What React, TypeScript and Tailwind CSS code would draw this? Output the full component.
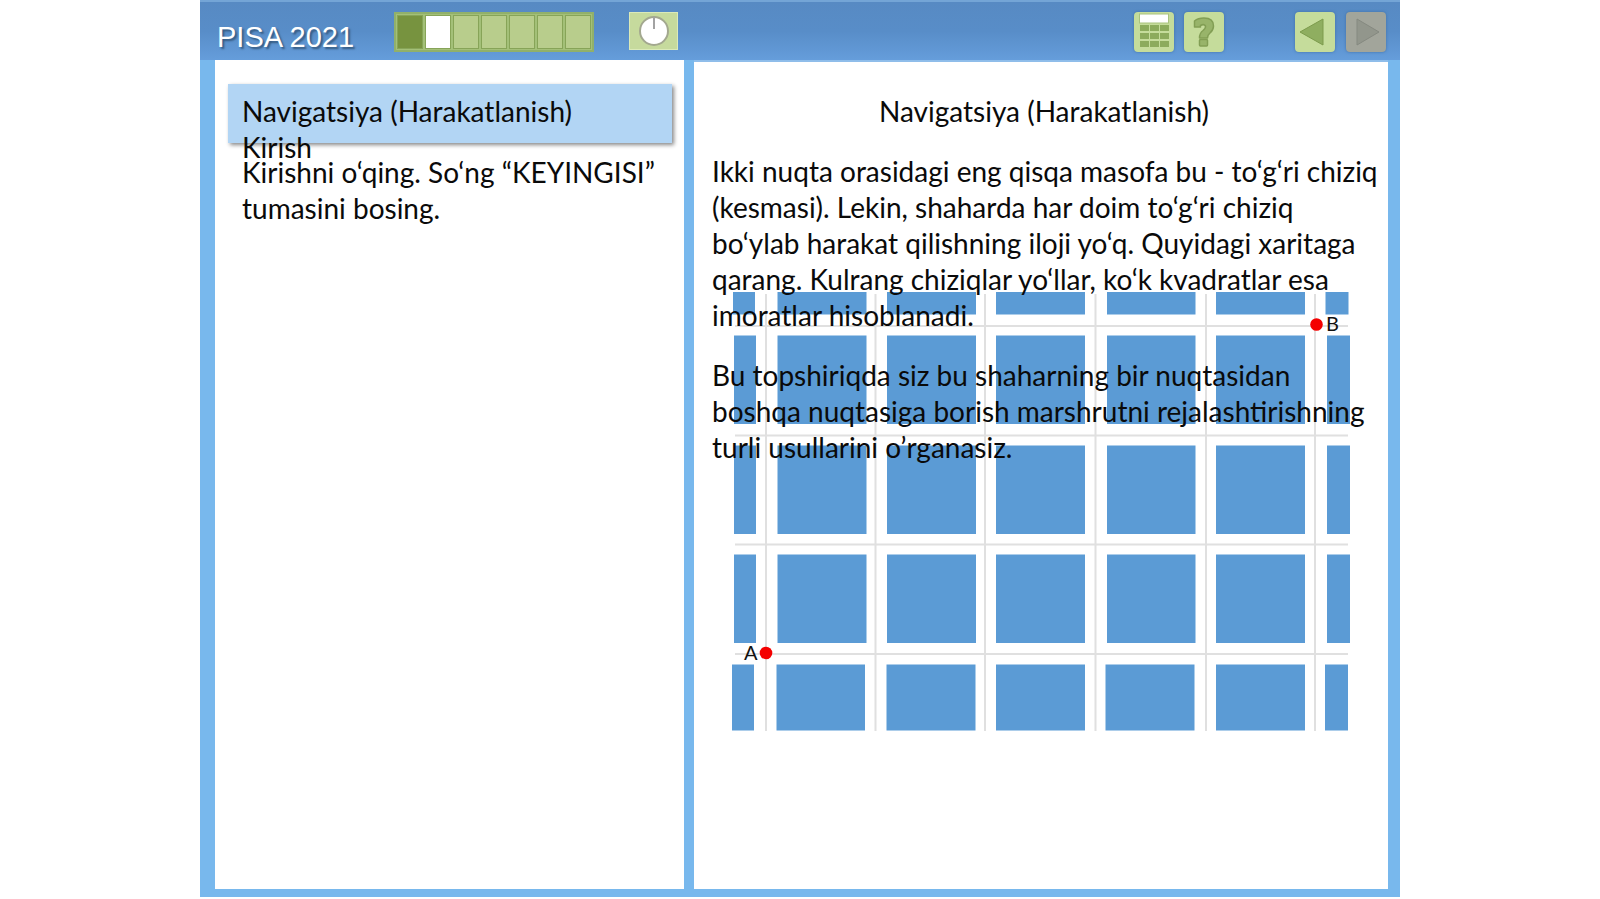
import type { ReactNode } from "react";

const STEPS = ["done", "current", "todo", "todo", "todo", "todo", "todo"] as const;

const stepColors = {
  done: "bg-[#77933f]",
  current: "bg-white",
  todo: "bg-[#b8cd8c]",
};

/* City map: [x, width] of each block in a row, [y, height] of each row */
const COLUMNS = [
  [2, 22],
  [45.5, 89],
  [155, 89],
  [264, 89],
  [375, 88.5],
  [484, 89],
  [595, 23],
];
const TOP_COLUMNS = [[1, 22], ...COLUMNS.slice(1, 6), [593.5, 23]];
const BOTTOM_COLUMNS = [
  [0, 22],
  [44.5, 88.5],
  [154.5, 89],
  [264, 89],
  [373.5, 89],
  [484, 89],
  [593, 23],
];
const ROWS = [
  { y: 1, height: 22.5, columns: TOP_COLUMNS },
  { y: 44.5, height: 88.5, columns: COLUMNS },
  { y: 154.5, height: 88.5, columns: COLUMNS },
  { y: 263.5, height: 88.5, columns: COLUMNS },
  { y: 373.5, height: 66, columns: BOTTOM_COLUMNS },
];
const STREETS_X = [34, 143.5, 253, 363.5, 474, 583];
const STREETS_Y = [35, 144.5, 253.5, 363];

function CityMap() {
  return (
    <svg viewBox="0 0 618 440" className="w-full" role="img" aria-label="Xarita">
      <g fill="#5b9bd5">
        {ROWS.map((row) =>
          row.columns.map(([x, width]) => (
            <rect key={`${row.y}-${x}`} x={x} y={row.y} width={width} height={row.height} />
          )),
        )}
      </g>
      <g stroke="#e0e0e0" strokeWidth="2">
        {STREETS_X.map((x) => (
          <line key={x} x1={x} x2={x} y1="3" y2="440" />
        ))}
        {STREETS_Y.map((y) => (
          <line key={y} x1="3" x2="616" y1={y} y2={y} />
        ))}
      </g>
      <g fill="#f40000">
        <circle cx="34" cy="362" r="6.3" />
        <circle cx="584.5" cy="33.5" r="6.3" />
      </g>
      <g fontSize="20" fill="#111111">
        <text x="12" y="369">A</text>
        <text x="594" y="40">B</text>
      </g>
    </svg>
  );
}

function ToolButton({
  label,
  disabled = false,
  children,
}: {
  label: string;
  disabled?: boolean;
  children: ReactNode;
}) {
  return (
    <button
      aria-label={label}
      disabled={disabled}
      className="size-10 rounded bg-[#c5dc9b] shadow-[0_0_3px_#3f6fa8] disabled:bg-[#a2a59b]"
    >
      <svg viewBox="0 0 40 40" className="size-10">
        {children}
      </svg>
    </button>
  );
}

function Header() {
  return (
    <header className="flex h-[60px] items-start border-t-2 border-[#74a5d6] bg-linear-to-b from-[#578ac3] via-[#588dc8] to-[#659ddb] pr-[14px] pl-[17px] pt-[10px]">
      <h1 className="w-[177px] pt-[7px] font-['Liberation_Sans'] text-[29px] leading-[36px] text-white [text-shadow:2px_2px_2px_#34597f]">
        PISA 2021
      </h1>
      <ol className="flex gap-[2px] border-2 border-[#91b06a] bg-[#a3c078] p-px">
        {STEPS.map((step, index) => (
          <li
            key={index}
            className={`h-[34px] w-[26px] border border-[#87a458] ${stepColors[step]}`}
          />
        ))}
      </ol>
      <button
        aria-label="Vaqt"
        className="ml-[35px] flex h-[38px] w-[49px] items-center justify-center border border-[#dbeab9] bg-[#c6da9d]"
      >
        <svg viewBox="0 0 32 32" className="size-8">
          <circle cx="16" cy="16" r="14" fill="#ffffff" stroke="#a3a88f" strokeWidth="2" />
          <path d="M16 2v12" stroke="#a3a3a3" strokeWidth="2" />
        </svg>
      </button>

      <div className="ml-auto flex gap-[10px]">
        <ToolButton label="Kalkulyator">
          <rect x="5.5" y="2" width="29" height="9" fill="#ffffff" stroke="#a9c27f" />
          <g fill="#8cab5c">
            {[13, 21, 29].map((y) =>
              [6, 16, 26].map((x) => <rect key={`${x}-${y}`} x={x} y={y} width="9" height="6" />),
            )}
          </g>
        </ToolButton>
        <ToolButton label="Yordam">
          <path
            d="M10.5 15V9Q14 6 20 6Q29.5 6 29.5 14Q29.5 18 26 21Q23.5 23 23.5 26H15.5Q15.5 21 19 18.5Q22 16 21.5 14Q20 11.5 16.5 13.5V15Z"
            fill="#98b46a"
            stroke="#829e54"
            strokeWidth="1.5"
            strokeLinejoin="round"
          />
          <rect
            x="15.5"
            y="27.5"
            width="8"
            height="6.5"
            rx="1"
            fill="#98b46a"
            stroke="#829e54"
            strokeWidth="1.5"
          />
        </ToolButton>
      </div>
      <div className="ml-[71px] flex gap-[11px]">
        <ToolButton label="Oldingisi">
          <path d="M5 20 28 7v26Z" fill="#8fae60" stroke="#7c9b4c" />
        </ToolButton>
        <ToolButton label="Keyingisi" disabled>
          <path d="M11 7v26l22-13Z" fill="#92968c" stroke="#858980" />
        </ToolButton>
      </div>
    </header>
  );
}

export default function App() {
  return (
    <div className="min-h-screen bg-white pb-[2px] font-['Lato',sans-serif] text-[28px] leading-[36px] text-[#0a0a0a]">
      <div className="mx-auto flex min-h-[calc(100vh-2px)] w-3/4 min-w-[1200px] flex-col bg-[#78b8ed]">
        <Header />
        <main className="grid flex-1 grid-cols-[469fr_694fr] gap-[10px] pr-3 pb-2 pl-[15px]">
          <section className="bg-white pt-6 pr-3 pl-[13px]">
            {/* The second title line hangs below the box */}
            <h2 className="h-[59px] bg-[#b2d5f4] px-[14px] pt-[9px] shadow-[2px_2px_4px_#888888]">
              Navigatsiya (Harakatlanish)
              <br />
              Kirish
            </h2>
            <p className="px-[14px] pt-[11px] whitespace-nowrap">
              Kirishni o‘qing. So‘ng “KEYINGISI”
              <br />
              tumasini bosing.
            </p>
          </section>

          <section className="grid grid-cols-1 items-start border-t-2 border-[#8fbdea] bg-white">
            <div className="col-start-1 row-start-1 pt-[229px] pr-[38px] pl-[38px]">
              <CityMap />
            </div>
            <div className="z-10 col-start-1 row-start-1 pt-[31px] pl-[18px]">
              <h2 className="pr-[12px] text-center">Navigatsiya (Harakatlanish)</h2>
              <p className="pt-6 whitespace-nowrap">
                Ikki nuqta orasidagi eng qisqa masofa bu - to‘g‘ri chiziq
                <br />
                (kesmasi). Lekin, shaharda har doim to‘g‘ri chiziq
                <br />
                bo‘ylab harakat qilishning iloji yo‘q. Quyidagi xaritaga
                <br />
                qarang. Kulrang chiziqlar yo‘llar, ko‘k kvadratlar esa
                <br />
                imoratlar hisoblanadi.
              </p>
              <p className="pt-6 whitespace-nowrap">
                Bu topshiriqda siz bu shaharning bir nuqtasidan
                <br />
                boshqa nuqtasiga borish marshrutni rejalashtirishning
                <br />
                turli usullarini o’rganasiz.
              </p>
            </div>
          </section>
        </main>
      </div>
    </div>
  );
}
